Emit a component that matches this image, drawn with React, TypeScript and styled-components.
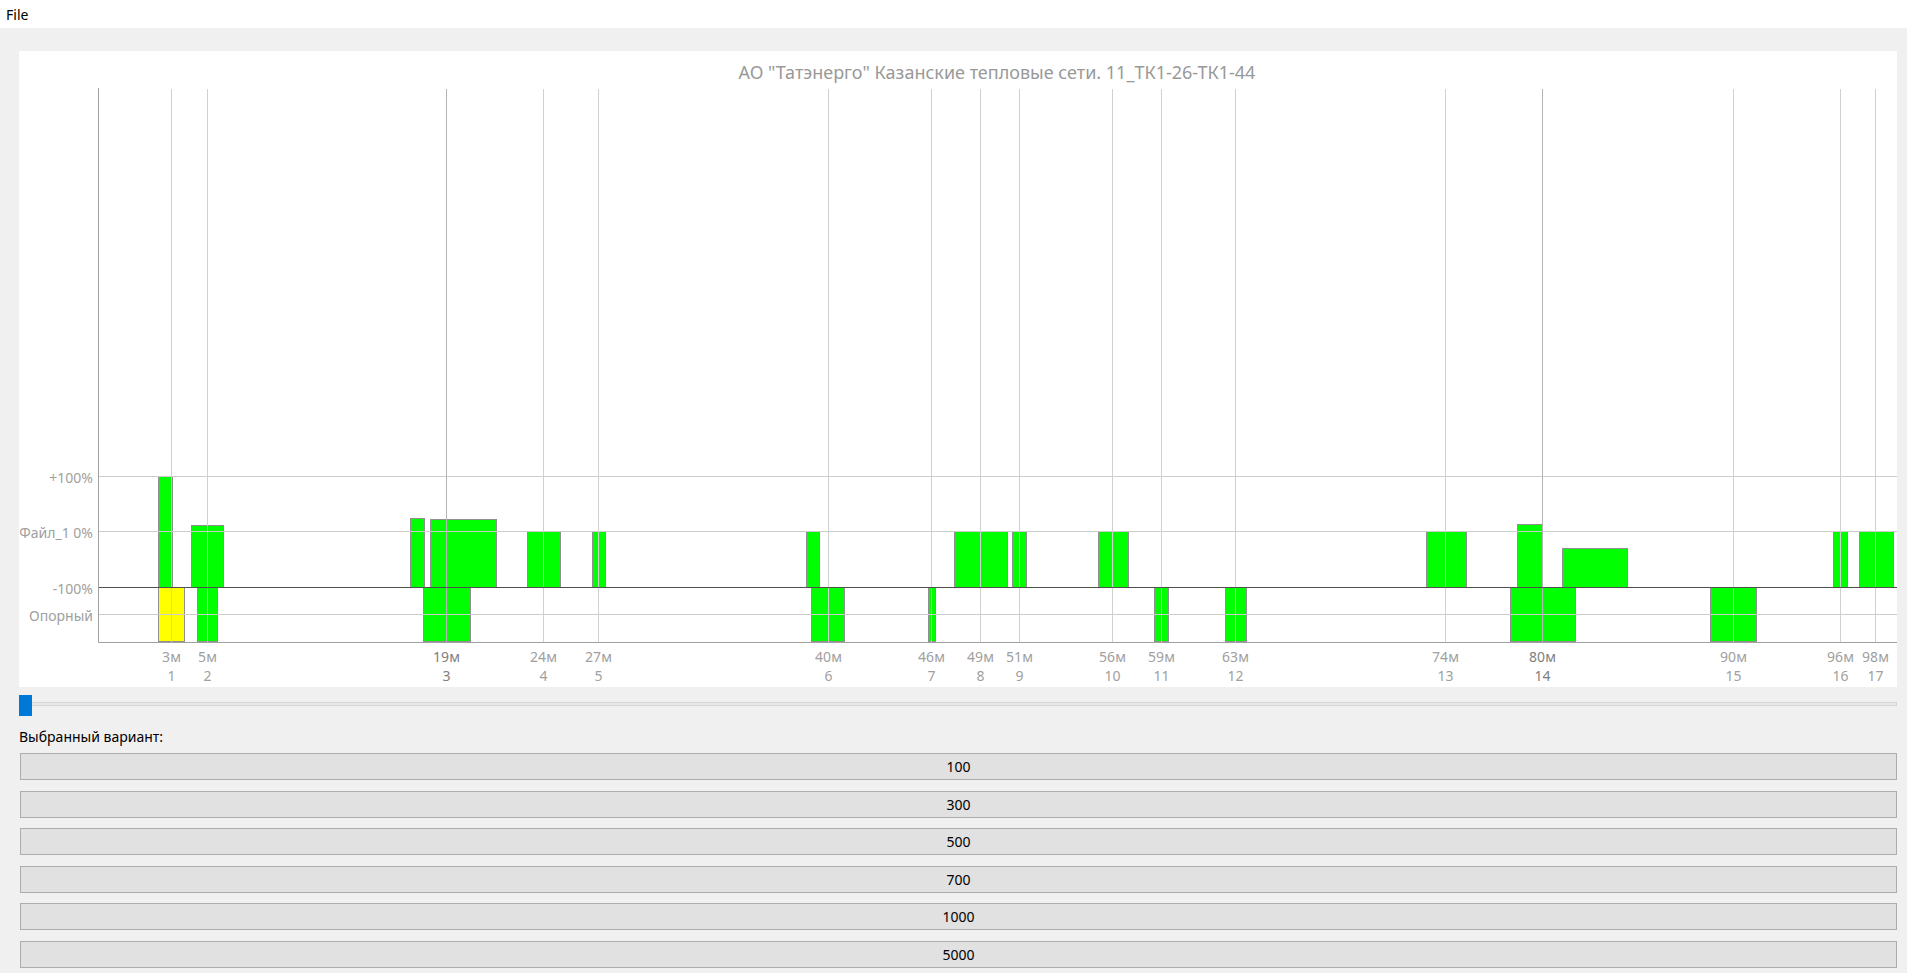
import styled, {createGlobalStyle} from "styled-components";

const GlobalStyle = createGlobalStyle`
  html, body {
    margin: 0;
    padding: 0;
    background: #f0f0f0;
    font-family: "Segoe UI", "Noto Sans", sans-serif;
  }
`

const Page = styled.div`
  display: flex;
  flex-direction: column;
  width: 1907px;
  min-height: 973px;
`

const MenuBar = styled.div`
  height: 28px;
  background: #ffffff;
  display: flex;
  align-items: center;
  padding-left: 6px;
  font-size: 14px;
  color: #000;
`

const Content = styled.div`
  display: flex;
  flex-direction: column;
  padding: 23px 10px 0 19px;
`

const ChartPanel = styled.div`
  height: 636px;
  background: #ffffff;
  svg {
    display: block;
  }
`

const SliderRow = styled.div`
  position: relative;
  height: 21px;
  margin-top: 8px;
`

const SliderTrack = styled.div`
  position: absolute;
  left: 0;
  right: 0;
  top: 7px;
  height: 2px;
  border: 1px solid #d6d6d6;
  background: #e7e7e7;
`

const SliderThumb = styled.div`
  position: absolute;
  left: 0;
  top: 0;
  width: 13px;
  height: 21px;
  background: #0078d7;
`

const Caption = styled.div`
  margin-top: 11px;
  font-size: 14px;
  line-height: 19px;
  color: #000;
`

const VariantList = styled.div`
  display: flex;
  flex-direction: column;
  gap: 10.6px;
  margin-top: 7px;
  padding-left: 1px;
`

const VariantButton = styled.button`
  height: 27px;
  box-sizing: border-box;
  border: 1px solid #adadad;
  background: #e1e1e1;
  font-family: "Segoe UI", "Noto Sans", sans-serif;
  font-size: 14px;
  color: #000;
  padding: 0;
`

const TEXT = "#a0a0a0"
const FONT = "'Segoe UI', 'Noto Sans', sans-serif"

const ticks = [
    {x: 171.5, m: 3, n: 1},
    {x: 207.5, m: 5, n: 2},
    {x: 446.5, m: 19, n: 3, strong: true},
    {x: 543.5, m: 24, n: 4},
    {x: 598.5, m: 27, n: 5},
    {x: 828.5, m: 40, n: 6},
    {x: 931.5, m: 46, n: 7},
    {x: 980.5, m: 49, n: 8},
    {x: 1019.5, m: 51, n: 9},
    {x: 1112.5, m: 56, n: 10},
    {x: 1161.5, m: 59, n: 11},
    {x: 1235.5, m: 63, n: 12},
    {x: 1445.5, m: 74, n: 13},
    {x: 1542.5, m: 80, n: 14, strong: true},
    {x: 1733.5, m: 90, n: 15},
    {x: 1840.5, m: 96, n: 16},
    {x: 1875.5, m: 98, n: 17},
]

// upper bars: [x0, x1, top], they all end on the -100% line
const upper = [
    [158, 172, 476], [191, 223, 525], [410, 424, 518], [430, 496, 519],
    [527, 560, 531], [592, 605, 531], [806, 819, 531], [954, 1007, 531],
    [1012, 1026, 531], [1098, 1128, 531], [1426, 1466, 531], [1517, 1542, 524],
    [1562, 1627, 548], [1833, 1847, 531], [1859, 1893, 531],
]

// lower bars: [x0, x1]
const lower = [
    [158, 184], [197, 217], [423, 470], [811, 844], [928, 935],
    [1154, 1168], [1225, 1246], [1510, 1575], [1710, 1756],
]

const yLabels = [
    {y: 483, t: "+100%"},
    {y: 538, t: "Файл_1 0%"},
    {y: 594, t: "-100%"},
    {y: 621, t: "Опорный"},
]

const ZERO = 587.5
const BOTTOM = 642.5
const LEFT = 98.5
const RIGHT = 1897

const Chart = () => (
    <svg width="1878" height="636" viewBox="19 51 1878 636">
        <text x="997" y="79" textAnchor="middle" fontFamily={FONT} fontSize="18" fill="#999">
            АО "Татэнерго" Казанские тепловые сети. 11_ТК1-26-ТК1-44
        </text>

        {upper.map(([a, b, top], i) => (
            <rect key={"u" + i} x={a + 0.5} y={top + 0.5} width={b - a} height={ZERO - top - 0.5}
                  fill="#00ff00" stroke="#8f8f8f" strokeWidth="1"/>
        ))}
        {lower.map(([a, b], i) => (
            <rect key={"l" + i} x={a + 0.5} y={ZERO} width={b - a} height={BOTTOM - ZERO - 1}
                  fill={i === 0 ? "#ffff00" : "#00ff00"} stroke="#8f8f8f" strokeWidth="1"/>
        ))}

        {[476.5, 531.5, 614.5].map(y => (
            <line key={y} x1={LEFT} x2={RIGHT} y1={y} y2={y} stroke="#cccccc"/>
        ))}
        {ticks.map(t => (
            <line key={t.m} x1={t.x} x2={t.x} y1={89} y2={BOTTOM}
                  stroke={t.strong ? "#b4b4b4" : "#d0d0d0"}/>
        ))}
        <line x1={LEFT} x2={RIGHT} y1={ZERO} y2={ZERO} stroke="#505050"/>
        <line x1={LEFT} x2={LEFT} y1={88} y2={BOTTOM} stroke="#a0a0a0"/>
        <line x1={LEFT} x2={RIGHT} y1={BOTTOM} y2={BOTTOM} stroke="#a0a0a0"/>

        {yLabels.map(l => (
            <text key={l.t} x="93" y={l.y} textAnchor="end" fontFamily={FONT} fontSize="14" fill={TEXT}>
                {l.t}
            </text>
        ))}
        {ticks.map(t => (
            <g key={"t" + t.m} fontFamily={FONT} fontSize="14" textAnchor="middle"
               fill={t.strong ? "#808080" : TEXT}>
                <text x={t.x} y={662}>{t.m}м</text>
                <text x={t.x} y={681}>{t.n}</text>
            </g>
        ))}
    </svg>
)

const variants = [100, 300, 500, 700, 1000, 5000]

const App = () => {
    return (
        <>
            <GlobalStyle/>
            <Page>
                <MenuBar>File</MenuBar>
                <Content>
                    <ChartPanel>
                        <Chart/>
                    </ChartPanel>
                    <SliderRow>
                        <SliderTrack/>
                        <SliderThumb/>
                    </SliderRow>
                    <Caption>Выбранный вариант:</Caption>
                    <VariantList>
                        {variants.map(v => <VariantButton key={v}>{v}</VariantButton>)}
                    </VariantList>
                </Content>
            </Page>
        </>
    )
}

export default App
